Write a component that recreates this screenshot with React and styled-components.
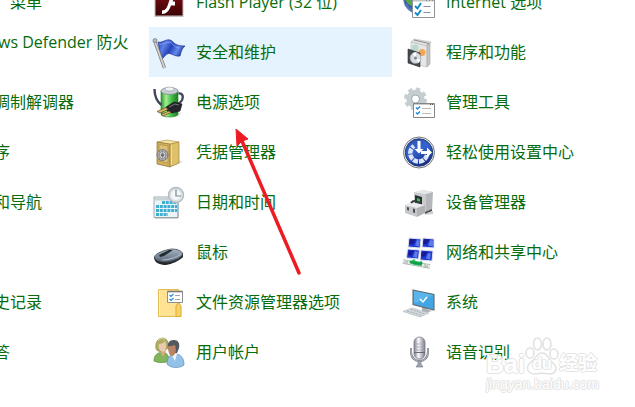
import React from 'react';
import styled, { createGlobalStyle } from 'styled-components';

const GlobalStyle = createGlobalStyle`
    * {
        box-sizing: border-box;
    }

    body {
        margin: 0;
        background: #fff;
        overflow: hidden;
        font-family: 'Open Sans', 'Noto Sans CJK SC', sans-serif;
    }
`;

const Page = styled.main`
    position: relative;
    min-height: 100vh;
    overflow: hidden;
`;

/* the list is scrolled a little, so the first row is cut at the top */
const Columns = styled.nav`
    display: grid;
    grid-template-columns: 142px 243px 1fr;
    column-gap: 7px;
    margin-top: -23px;
`;

const Column = styled.ul`
    list-style: none;
    margin: 0;
    padding: 0;
    margin-left: ${props => props.$cut ? '-6px' : '0'};
`;

const Item = styled.a`
    display: flex;
    align-items: center;
    gap: 11px;
    height: 50px;
    padding: 0 4px;
    padding-left: ${props => props.$indent ?? 4}px;
    padding-bottom: ${props => props.$firstLine ? '20px' : '0'};
    background-color: ${props => props.$active ? '#e5f3ff' : 'transparent'};
    color: #066c0c;
    font-size: 16px;
    line-height: 20px;
    white-space: nowrap;
    text-decoration: none;

    svg {
        flex: none;
        width: 32px;
        height: 32px;
        overflow: visible;
    }
`;

const Arrow = styled.svg`
    position: absolute;
    left: 230px;
    top: 124px;
    width: 80px;
    height: 156px;
    pointer-events: none;
`;

const Watermark = styled.div`
    position: absolute;
    left: 486px;
    top: 336px;
    width: 116px;
    color: #fff;
    font-family: 'Liberation Sans', 'Noto Sans CJK SC', sans-serif;
    font-weight: bold;
    text-shadow: 1px 0 #e0e0e0, -1px 0 #e0e0e0, 0 1px #e0e0e0, 0 -1px #e0e0e0;
    opacity: 0.85;
    pointer-events: none;
`;

const Brand = styled.div`
    display: flex;
    align-items: flex-end;
    height: 40px;
`;

const BrandText = styled.span`
    font-size: ${props => props.$size}px;
    line-height: 24px;
`;

const Paw = styled.span`
    display: grid;
    width: 34px;
    height: 40px;

    svg, span {
        grid-area: 1 / 1;
    }

    svg {
        width: 34px;
        height: 40px;
    }

    span {
        align-self: end;
        text-align: center;
        font-size: 16px;
        line-height: 24px;
    }
`;

const Site = styled.div`
    font-family: 'Liberation Sans', sans-serif;
    font-size: 14px;
    line-height: 16px;
    font-weight: normal;
`;

const FlashIcon = () => (
    <svg viewBox="0 0 32 32" aria-hidden="true">
        <defs>
            <linearGradient id="flash" x2="0" y2="1">
                <stop stopColor="#8a1015" />
                <stop offset="1" stopColor="#3c0205" />
            </linearGradient>
        </defs>
        <rect x="1.5" y="1.5" width="29" height="29.5" fill="#c5bcbc" />
        <rect x="2.5" y="2" width="27" height="27.5" fill="url(#flash)" />
        <path d="M9 24.500c4 0 5-3.500 6-6 1.700-6 3.500-10.500 9-10.500v4c-2.700 0-3.700 1.500-4.500 3.500H22v4h-4c-1.500 4-3.500 8.500-9 8.500z" fill="#fff" />
    </svg>
);

const FlagIcon = () => (
    <svg viewBox="0 0 32 32" aria-hidden="true">
        <defs>
            <linearGradient id="flag" x2="1" y2="0.4">
                <stop stopColor="#2742a8" />
                <stop offset="0.3" stopColor="#5d7fe8" />
                <stop offset="0.55" stopColor="#2543b8" />
                <stop offset="0.8" stopColor="#6689ee" />
                <stop offset="1" stopColor="#2442a5" />
            </linearGradient>
        </defs>
        <path d="M5 6C9 7.500 12 3 17 4c4 1 3 6 15 6-3 2-4 6-5 10-6 1-9-4-13-2-2 1-3 4-5.500 5z" fill="url(#flag)" stroke="#1c3494" strokeWidth="0.7" />
        <path d="M6 8c4 1 7-2 11-2 3 1 3 5 9 6" fill="none" stroke="#8ca8f5" strokeWidth="0.8" />
        <path d="M1.500 4.500L11.500 32" stroke="#777" strokeWidth="3.200" />
        <path d="M1.500 4.500L11.500 32" stroke="#d3d3d3" strokeWidth="1.800" />
        <circle cx="2" cy="4.500" r="2" fill="#bbb" stroke="#777" strokeWidth="0.7" />
    </svg>
);

const PowerIcon = () => (
    <svg viewBox="0 0 32 32" aria-hidden="true">
        <defs>
            <linearGradient id="battery">
                <stop stopColor="#2d9632" />
                <stop offset="0.3" stopColor="#a3f091" />
                <stop offset="0.6" stopColor="#46c24b" />
                <stop offset="1" stopColor="#187a20" />
            </linearGradient>
        </defs>
        <path d="M22 29l7-3-4 5z" fill="#ddd" />
        <path d="M8 5v23c0 4 17 4 17 0V5z" fill="url(#battery)" stroke="#2a7c33" strokeWidth="0.6" />
        <ellipse cx="16.500" cy="5" rx="8.500" ry="3.500" fill="#c5cdd2" stroke="#7f8b90" strokeWidth="0.8" />
        <ellipse cx="16.500" cy="3" rx="4.500" ry="2" fill="#eef3f5" stroke="#98a3a8" strokeWidth="0.6" />
        <path d="M1.500 3c0 8 3 13 7 16M25.500 7.500c6-1 6 8-2 11" fill="none" stroke="#42475a" strokeWidth="2.400" />
        <path d="M13 21l8-5 8 2-2 7-8 2-5-2z" fill="#25252c" stroke="#111" strokeWidth="0.6" />
        <path d="M16 21l6-3 4 1" fill="none" stroke="#73747e" />
        <path d="M4 25.500l9-4 2 2-8 3.500zM8 28.500l8-3.500 2 1.500-8 3.500z" fill="#dfb95f" stroke="#5d4925" strokeWidth="0.7" />
    </svg>
);

const SafeIcon = () => (
    <svg viewBox="0 0 32 32" aria-hidden="true">
        <path d="M17 31l13-5-4-2z" fill="#e1e1e1" />
        <path d="M4 6l10-2 12 2-9 3z" fill="#f6e5a5" stroke="#ab8a42" strokeWidth="0.6" />
        <path d="M4 6l13 2v23L4 28z" fill="#cfae5c" stroke="#8a7034" strokeWidth="0.7" />
        <path d="M17 8l9-2v21l-9 4z" fill="#dfc06a" stroke="#a08342" strokeWidth="0.7" />
        <path d="M18.500 9.500v19" stroke="#f3dc93" />
        <path d="M6 8.500l9 1.500v17L6 25z" fill="#dcc27a" stroke="#a98742" strokeWidth="0.6" />
        <circle cx="9.500" cy="19" r="5.500" fill="#bbb" stroke="#777" />
        <circle cx="9.500" cy="19" r="3.500" fill="#e6e6e6" stroke="#8b8b8b" />
        <path d="M4 19h11M9.500 13v12M6 15l7 8M13 15l-7 8" stroke="#858585" strokeWidth="0.7" />
        <circle cx="9.500" cy="19" r="1.500" fill="#666" />
    </svg>
);

const CalendarIcon = () => (
    <svg viewBox="0 0 32 32" aria-hidden="true">
        <path d="M1 11h24v20.500H1z" fill="#eaf5f8" stroke="#a5adb0" />
        <path d="M2 12h22v2.500H2z" fill="#cbd2d5" />
        <path d="M9 16.500h15M3 20.500h21M3 24.500h21M3 28.500h12" stroke="#3eafd0" strokeWidth="3" strokeDasharray="3 0.8" />
        <path d="M25 12v20H2" fill="none" stroke="#8e989c" strokeWidth="0.8" />
        <circle cx="23" cy="9" r="7.500" fill="#e0e6e9" stroke="#b4bbbf" strokeWidth="1.500" />
        <circle cx="23" cy="9" r="5.500" fill="#f3f7f9" stroke="#c7d0d4" strokeWidth="0.6" />
        <path d="M23 3.500V10h5" fill="none" stroke="#7d8990" strokeWidth="1.200" />
    </svg>
);

const MouseIcon = () => (
    <svg viewBox="0 0 32 32" aria-hidden="true">
        <defs>
            <linearGradient id="mouse" x2="0" y2="1">
                <stop stopColor="#a9b5c1" />
                <stop offset="0.6" stopColor="#788798" />
                <stop offset="1" stopColor="#55616d" />
            </linearGradient>
        </defs>
        <path d="M1 21c0 6 6 8 12 8 6-1 13-4 17-8v-4z" fill="#24282c" />
        <path d="M1.500 21c0-3 9-7 17-8 6 0 11 2 11 5 0 3-9 8-17 8-6 0-11-2-11-5z" fill="url(#mouse)" stroke="#444c54" strokeWidth="0.8" />
        <path d="M6 19l10-5h4l-9 6-4 1z" fill="#222930" />
        <path d="M9 24c7 0 15-3 19-6" fill="none" stroke="#a5b4c3" strokeWidth="1.200" />
    </svg>
);

const FolderIcon = () => (
    <svg viewBox="0 0 32 32" aria-hidden="true">
        <path d="M5.500 3.500h20v27h-20z" fill="#ffe392" stroke="#e3bb53" />
        <path d="M6.500 4v26" stroke="#fff0bd" />
        <path d="M28 30.500h-5V20l2.500-3.500L28 20z" fill="#f6d26a" stroke="#dda831" />
        <path d="M14.500 5.500h15v11h-15z" fill="#fff" stroke="#8b8f94" />
        <path d="M14.500 5.500h15" stroke="#777" strokeWidth="1.600" />
        <path d="M22 9.500h5M22 13.500h5" stroke="#a5a5a5" />
        <path d="M16.500 9l1.500 1.500L20.500 8M16.500 13l1.500 1.500 2.500-2.500" fill="none" stroke="#278bd2" strokeWidth="1.200" />
    </svg>
);

const UsersIcon = () => (
    <svg viewBox="0 0 32 32" aria-hidden="true">
        <path d="M1 25c0-6 3-8 8-9 5 0 7 4 7 9-4 2-11 2-15 0z" fill="#84b45c" stroke="#5a8a3a" strokeWidth="0.7" />
        <path d="M7 15h6l-3 6z" fill="#dca783" />
        <path d="M3 13c-1-6 1-10 6-11 5 0 7 4 6 10-3 4-10 5-12 1z" fill="#b0ad62" stroke="#8a8848" strokeWidth="0.6" />
        <path d="M6 8c3 0 5-1 6-3 2 5 1 11-2 11s-5-4-4-8z" fill="#ecc9ac" />
        <path d="M5 5c2-3 5-3 7-1" fill="none" stroke="#dedb98" />
        <path d="M14 28c0-6 2-9 8-10 6 0 9 4 9 11-3 3-13 4-17-1z" fill="#94c1e8" stroke="#5c8cb8" strokeWidth="0.7" />
        <path d="M18 18h6l-2 7z" fill="#eff5fc" />
        <path d="M15 13c-1-6 1-9 6-9 4 0 6 3 5 8l-2 5h-6z" fill="#54585f" />
        <path d="M15 10c3 1 5-1 7-1 2 6 0 11-3 11s-4-6-4-10z" fill="#b98466" />
    </svg>
);

const InternetIcon = () => (
    <svg viewBox="0 0 32 32" aria-hidden="true">
        <circle cx="15" cy="13" r="14.500" fill="#315eb3" stroke="#929bad" />
        <path d="M1 12l7-2 5 8-4 2-4-2zM13 1l9 2-3 8-6-1z" fill="#59a648" />
        <path d="M3 18c2 4 4 6 7 7" fill="none" stroke="#5473c4" strokeWidth="2" />
        <path d="M9.500 13.500h22v18h-22z" fill="#fff" stroke="#929292" />
        <path d="M10 14.500h21" stroke="#c5c5c5" strokeWidth="2" />
        <path d="M23 14h1M26 14h1M29 14h1" stroke="#555" />
        <path d="M20.500 20.500h7M20.500 26.500h7" stroke="#8a8eaa" />
        <path d="M12 20l2.500 2.500L18 17M12 26.500l2.500 2.500L18 24" fill="none" stroke="#168ac3" strokeWidth="1.900" />
    </svg>
);

const ProgramsIcon = () => (
    <svg viewBox="0 0 32 32" aria-hidden="true">
        <path d="M8 6l16 3v22L8 27z" fill="#e6e6e6" stroke="#c0c0c0" strokeWidth="0.7" />
        <path d="M24 9l3-3v22l-3 3z" fill="#c4c4c4" stroke="#a5a5a5" strokeWidth="0.6" />
        <path d="M8 6l3-3 17 3-4 4z" fill="#e2e2e2" stroke="#bbb" strokeWidth="0.7" />
        <path d="M11 4l15 3.500-2 2" fill="none" stroke="#888" />
        <circle cx="12" cy="12" r="3.500" fill="#b9d9cb" />
        <circle cx="19" cy="16.500" r="3.500" fill="#f2a656" />
        <path d="M5 13l12 4v14L5 27z" fill="#454a52" stroke="#262b31" strokeWidth="0.6" />
        <circle cx="12.500" cy="22" r="5.500" fill="#d8dddf" stroke="#89959b" strokeWidth="0.6" />
        <path d="M12.500 22l-3-5 4-1zM12.500 22l5 2-2 3z" fill="#fff" />
        <circle cx="12.500" cy="22" r="1.500" fill="#7d868d" />
    </svg>
);

const ToolsIcon = () => (
    <svg viewBox="0 0 32 32" aria-hidden="true">
        <circle cx="12.500" cy="13" r="9.500" fill="none" stroke="#c6cdd1" strokeWidth="4" strokeDasharray="4.200 3.260" />
        <circle cx="12.500" cy="13" r="6.500" fill="none" stroke="#c6cdd1" strokeWidth="5.500" />
        <circle cx="12.500" cy="13" r="4" fill="none" stroke="#a3acb2" strokeWidth="1" />
        <path d="M10.500 17.500h21v14h-21z" fill="#fff" stroke="#858585" />
        <path d="M11 18.500h20" stroke="#ccc" />
        <path d="M27 18.500h1M29 18.500h1" stroke="#555" />
        <path d="M19 22.500h9M19 27.500h9" stroke="#bcbcbc" />
        <path d="M13 21.500l1.500 1.500 2.500-2.500M13 26.500l1.500 1.500 2.500-2.500" fill="none" stroke="#278bd2" strokeWidth="1.500" />
    </svg>
);

const EaseIcon = () => (
    <svg viewBox="0 0 32 32" aria-hidden="true">
        <defs>
            <linearGradient id="ease" x2="0.5" y2="1">
                <stop stopColor="#2d50a9" />
                <stop offset="0.5" stopColor="#3564cf" />
                <stop offset="1" stopColor="#1a318a" />
            </linearGradient>
        </defs>
        <circle cx="16" cy="16.500" r="15.500" fill="#eee" stroke="#73777e" />
        <circle cx="16" cy="16.500" r="13.700" fill="url(#ease)" stroke="#223775" />
        <path d="M24 19A8.500 8.500 0 1 1 11 10" fill="none" stroke="#dce6f8" strokeWidth="4.500" strokeDasharray="5 1" />
        <path d="M14.500 5h3v8h3l-4.500 4.500-4.500-4.500h3zM18 15h6v-3.500l5 5-5 5V18h-6z" fill="#fff" />
    </svg>
);

const DeviceIcon = () => (
    <svg viewBox="0 0 32 32" aria-hidden="true">
        <path d="M20 29l10-4v3z" fill="#ccc" />
        <path d="M11 6l12 2v18l-12-4z" fill="#c9cbcd" />
        <path d="M19 4l11 2-1 19-6 1V8z" fill="#b4b6b9" />
        <path d="M11 6l8-2 11 2-7 2z" fill="#e6e7e8" />
        <path d="M12 9l7 2v8l-7-2z" fill="#2e3134" />
        <path d="M14 12l3 1v3l-3-1z" fill="#23c943" />
        <path d="M22 26l7-3v2l-7 3z" fill="#505356" />
        <path d="M2 19l6-3 14 3v3l-8 1z" fill="#ebecee" />
        <path d="M2 19l12 3v9L2 27z" fill="#c6c8cb" />
        <path d="M14 22l8-3v8l-8 4z" fill="#b0b2b5" />
        <path d="M8 17c2-3 5-2 7-1l3 1" fill="none" stroke="#393c3f" strokeWidth="1.800" />
        <path d="M4 21l2 .5v3L4 24zM10 22.500l2 .5v4l-2-.5z" fill="#4b4e51" />
    </svg>
);

const NetworkIcon = () => (
    <svg viewBox="0 0 32 32" aria-hidden="true">
        <path d="M6 2l12 1-1 9-12-1zM20 2l11 1v9l-12-1zM4.500 13l12 1-1 9-12-1zM18 14l12 1-1 10-12-1z" fill="#1d37cf" stroke="#dfe2ee" strokeWidth="1" />
        <path d="M7 3l6 .6-3 5-4-1zM21 3l6 .6-4 5-3-1zM6 14.500l5 .5-3 5-3-1zM19 15.500l6 .5-4 5-3-1z" fill="#1a1a95" />
        <path d="M14 4l3 .5-1 6-4-1zM27 4l3 .5v6l-5-1zM12 15l3 1-1 6-4-1zM25 17l3 .5-1 6-4-1z" fill="#5b7bea" />
        <path d="M0 25.500l27 5" stroke="#a9b1ae" strokeWidth="4.500" />
        <path d="M0 25.500l27 5" stroke="#e3eae6" strokeWidth="3" />
        <path d="M6 26l5-3 2 2 6 1v4l-8-1z" fill="#31c56c" />
        <path d="M7 26l10 2 2-2" fill="none" stroke="#12a047" strokeWidth="2.500" />
        <path d="M2 25v2M4 25v3M22 28v4M24 29v3" stroke="#a2aaa7" />
    </svg>
);

const SystemIcon = () => (
    <svg viewBox="0 0 32 32" aria-hidden="true">
        <path d="M19 20v5l-5 1 8 1 7-2-5-2v-2z" fill="#abb2b7" />
        <path d="M10 4l21 4.500v15.500l-21-5.500z" fill="#42a6e4" stroke="#606970" strokeWidth="1.100" />
        <path d="M11 5l19 4-17 8-2-1z" fill="#5cb5ea" />
        <path d="M17 13l3 3 4-5" fill="none" stroke="#fff" strokeWidth="1.500" />
        <path d="M0 25.500l9-3.500 17 5-9 4z" fill="#d4dadd" stroke="#b4bbbf" strokeWidth="0.7" />
        <path d="M4 25l15 4.500M8 23.500l14 4.500" stroke="#a3adb3" strokeDasharray="2 1" />
    </svg>
);

const MicIcon = () => (
    <svg viewBox="0 0 32 32" aria-hidden="true">
        <defs>
            <linearGradient id="mic">
                <stop stopColor="#777987" />
                <stop offset="0.4" stopColor="#fafaff" />
                <stop offset="1" stopColor="#767885" />
            </linearGradient>
        </defs>
        <path d="M8 12v4c0 12 17 12 17 0v-4" fill="none" stroke="#777b84" strokeWidth="2" />
        <path d="M8 12v4c0 12 17 12 17 0v-4" fill="none" stroke="#d0d2d8" strokeWidth="0.7" />
        <rect x="11" y="1" width="11" height="22" rx="5.500" fill="url(#mic)" stroke="#777987" strokeWidth="0.8" />
        <path d="M11.500 8h5M11.500 11h5M11.500 14h5M17.500 8h4M17.500 11h4M17.500 14h4" stroke="#a4a6b4" />
        <path d="M11 16.500h11" stroke="#676976" />
        <path d="M15 24h3v4l2 3h-7l2-3z" fill="#a2a5af" stroke="#737681" strokeWidth="0.6" />
    </svg>
);

const leftItems = [
    { name: '菜单', indent: 16 },
    { name: 'ws Defender 防火', indent: 4, firstLine: true },
    { name: '调制解调器' },
    { name: '序' },
    { name: '和导航' },
    null,
    { name: '史记录' },
    { name: '答' },
];

const middleItems = [
    { name: 'Flash Player (32 位)', icon: FlashIcon },
    { name: '安全和维护', icon: FlagIcon, active: true },
    { name: '电源选项', icon: PowerIcon },
    { name: '凭据管理器', icon: SafeIcon },
    { name: '日期和时间', icon: CalendarIcon },
    { name: '鼠标', icon: MouseIcon },
    { name: '文件资源管理器选项', icon: FolderIcon },
    { name: '用户帐户', icon: UsersIcon },
];

const rightItems = [
    { name: 'Internet 选项', icon: InternetIcon },
    { name: '程序和功能', icon: ProgramsIcon },
    { name: '管理工具', icon: ToolsIcon },
    { name: '轻松使用设置中心', icon: EaseIcon },
    { name: '设备管理器', icon: DeviceIcon },
    { name: '网络和共享中心', icon: NetworkIcon },
    { name: '系统', icon: SystemIcon },
    { name: '语音识别', icon: MicIcon },
];

const Empty = styled.li`
    height: 50px;
`;

const ItemList = ({ items, cut }) => (
    <Column $cut={cut}>
        {items.map((item, index) => {
            if (!item) return <Empty key={index} />;
            const Icon = item.icon;
            return (
                <li key={item.name}>
                    <Item
                        href="#"
                        $active={item.active}
                        $indent={cut ? item.indent ?? 0 : 4}
                        $firstLine={item.firstLine}
                    >
                        {Icon && <Icon />}
                        <span>{item.name}</span>
                    </Item>
                </li>
            );
        })}
    </Column>
);

const App = () => {
    return (
        <Page>
            <GlobalStyle />
            <Columns>
                <ItemList items={leftItems} cut />
                <ItemList items={middleItems} />
                <ItemList items={rightItems} />
            </Columns>

            <Arrow viewBox="0 0 80 156" aria-hidden="true">
                <path d="M69 149L12 17" stroke="#ed1c24" strokeWidth="3.500" strokeLinecap="round" />
                <path d="M6 5l12 10-6 2-5 5z" fill="#ed1c24" stroke="#ed1c24" />
            </Arrow>

            <Watermark>
                <Brand>
                    <BrandText $size={25}>Bai</BrandText>
                    <Paw>
                        <svg viewBox="0 0 34 40" aria-hidden="true">
                            <g fill="#fff" stroke="#dcdcdc" strokeWidth="1.500">
                                <ellipse cx="5" cy="17" rx="4" ry="5" />
                                <ellipse cx="12.500" cy="8" rx="4" ry="6" />
                                <ellipse cx="22" cy="8" rx="4" ry="6" />
                                <ellipse cx="29" cy="18" rx="4" ry="5" />
                                <path d="M17 17c6 0 6 6 10 9 7 6 4 12-3 12-5-1-9-1-14 0-8 0-10-7-4-12 5-3 5-9 11-9z" />
                            </g>
                        </svg>
                        <span>du</span>
                    </Paw>
                    <BrandText $size={19}>经验</BrandText>
                </Brand>
                <Site>jingyan.baidu.com</Site>
            </Watermark>
        </Page>
    );
};

export default App;
